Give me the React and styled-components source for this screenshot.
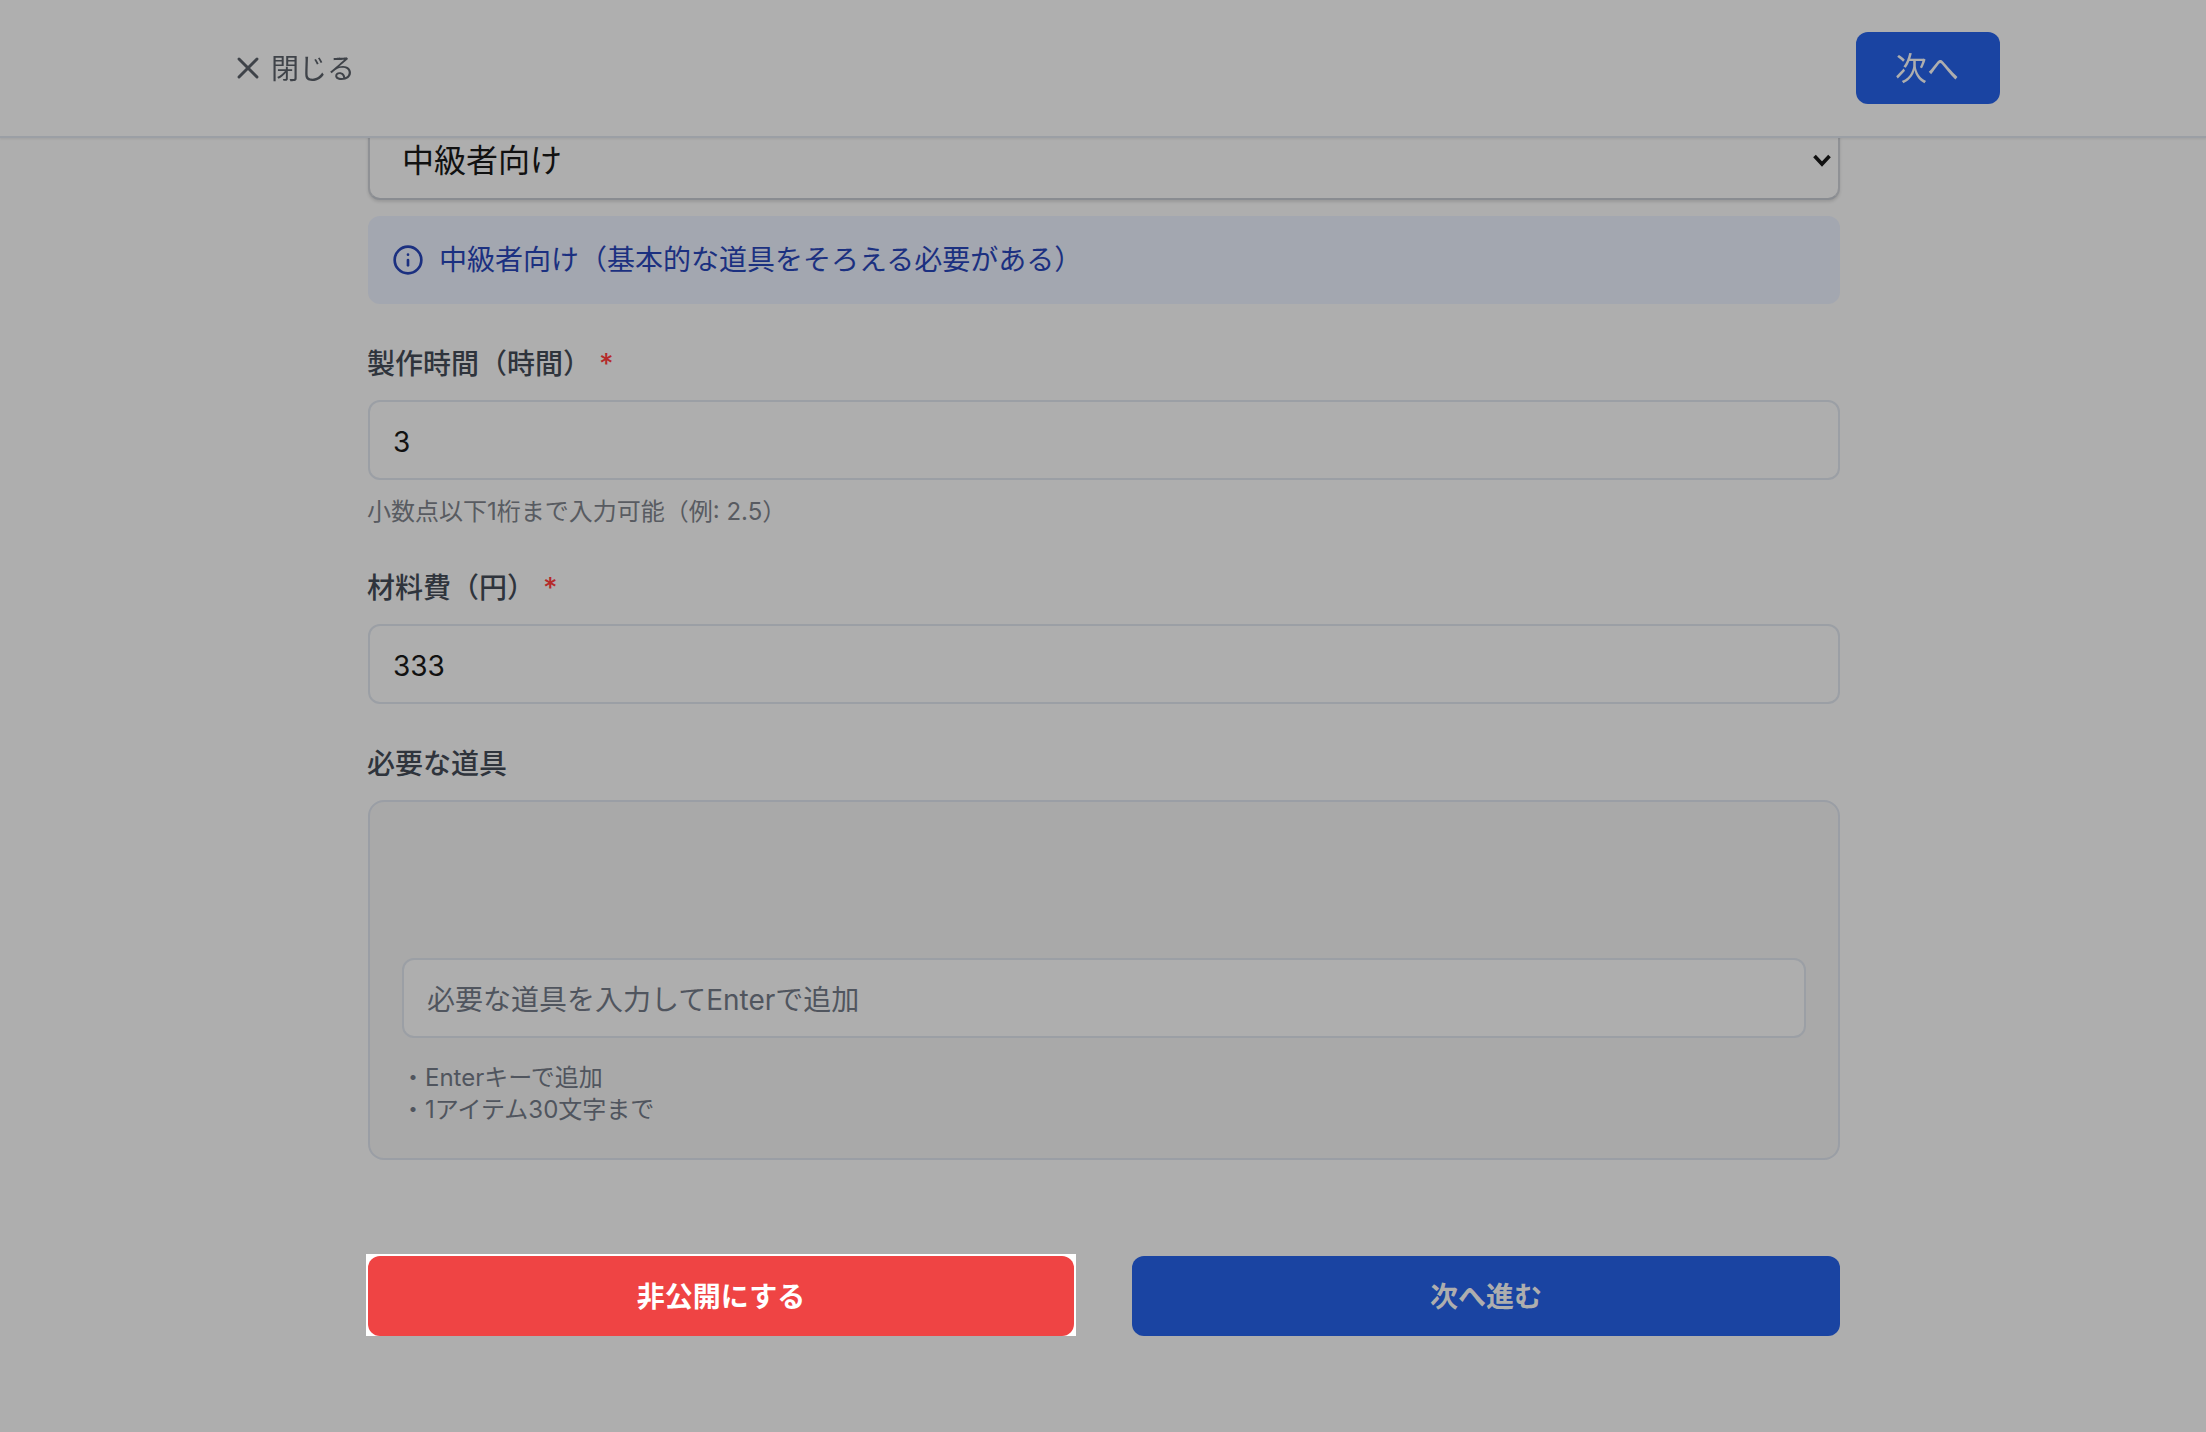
import React from "react";
import styled, { createGlobalStyle } from "styled-components";
import { X, Info } from "lucide-react";

const GlobalStyle = createGlobalStyle`
	html,
	body {
		margin: 0;
		height: 100%;
		overflow: hidden;
		background: #aeaeae;
	}
	body {
		font-family: Inter, "Noto Sans CJK JP", sans-serif;
	}
	* {
		box-sizing: border-box;
	}
`;

function App() {
	return (
		<>
			<GlobalStyle />
			<Header>
				<CloseButton type="button">
					<X size={36} strokeWidth={2} />
					<span>閉じる</span>
				</CloseButton>
				<NextButton type="button">次へ</NextButton>
			</Header>

			<Main>
				<SelectWrap>
					<LevelSelect defaultValue="middle">
						<option value="middle">中級者向け</option>
					</LevelSelect>
					<SelectArrow viewBox="0 0 20 14" aria-hidden="true">
						<path d="M2.5 3 L10 11 L17.5 3" />
					</SelectArrow>
				</SelectWrap>
				<Notice>
					<Info size={32} strokeWidth={2} />
					<span>中級者向け（基本的な道具をそろえる必要がある）</span>
				</Notice>

				<Label>
					製作時間（時間）<Required>*</Required>
				</Label>
				<TextInput type="text" value="3" readOnly />
				<Hint>小数点以下1桁まで入力可能（例: 2.5）</Hint>

				<Label>
					材料費（円）<Required>*</Required>
				</Label>
				<TextInput type="text" value="333" readOnly />

				<Label>必要な道具</Label>
				<ToolsBox>
					<TagArea />
					<ToolInput type="text" placeholder="必要な道具を入力してEnterで追加" />
					<ToolHints>
						<div>・Enterキーで追加</div>
						<div>・1アイテム30文字まで</div>
					</ToolHints>
				</ToolsBox>

				<Actions>
					<Highlight>
						<ActionButton $bg="#ef4444" $color="#fff" type="button">
							非公開にする
						</ActionButton>
					</Highlight>
					<ActionButton $bg="#1a44a2" $color="#aeaeae" type="button">
						次へ進む
					</ActionButton>
				</Actions>
			</Main>
		</>
	);
}

const Header = styled.header`
	position: fixed;
	top: 0;
	left: 0;
	right: 0;
	z-index: 10;
	display: flex;
	align-items: center;
	justify-content: space-between;
	height: 138px;
	padding: 0 206px;
	background: #afafaf;
	border-bottom: 2px solid #9b9fa5;
	box-shadow: 0 1px 2px rgba(0, 0, 0, 0.08);
`;

const CloseButton = styled.button`
	display: flex;
	align-items: center;
	gap: 5px;
	padding: 0 0 0 24px;
	border: none;
	background: none;
	color: #3f4349;
	font-family: inherit;
	font-size: 28px;

	span {
		padding-bottom: 2px;
	}
`;

const NextButton = styled.button`
	width: 144px;
	height: 72px;
	padding: 0 2px 4px 0;
	border: none;
	border-radius: 12px;
	background: #1a44a2;
	color: #aeaeae;
	font-family: inherit;
	font-size: 32px;
`;

const Main = styled.main`
	display: flex;
	flex-direction: column;
	width: 1472px;
	margin: 0 auto 0 368px;
	padding-top: 119px;
`;

const SelectWrap = styled.div`
	position: relative;
`;

const LevelSelect = styled.select`
	display: block;
	width: 100%;
	height: 81px;
	padding: 2px 32px 0;
	border: 2px solid #8f9195;
	border-bottom-color: #898c91;
	border-radius: 12px;
	background: #aeaeae;
	box-shadow: 0 2px 3px rgba(0, 0, 0, 0.12);
	color: #111;
	font-family: inherit;
	font-size: 32px;
	appearance: none;
`;

const SelectArrow = styled.svg`
	position: absolute;
	top: 34px;
	right: 8px;
	width: 20px;
	height: 14px;
	fill: none;
	stroke: #111;
	stroke-width: 3.6;
`;

const Notice = styled.div`
	display: flex;
	align-items: center;
	gap: 15px;
	margin-top: 16px;
	padding: 24px;
	border-radius: 12px;
	background: #a3a7b0;
	color: #1b3080;
	font-size: 28px;
	line-height: 40px;
`;

const Label = styled.label`
	display: block;
	margin: 40px 0 16px -1px;
	color: #2f343c;
	font-size: 28px;
	font-weight: 500;
	line-height: 40px;
`;

const Required = styled.span`
	margin-left: 8px;
	color: #b52a2a;
`;

const TextInput = styled.input`
	display: block;
	width: 100%;
	height: 80px;
	padding: 4px 23px 0;
	border: 2px solid #9b9fa5;
	border-radius: 12px;
	background: #aeaeae;
	color: #111;
	font-family: inherit;
	font-size: 28px;
	outline: none;
`;

const Hint = styled.p`
	margin: 16px 0 0 -1px;
	color: #585b61;
	font-size: 24px;
	line-height: 32px;
`;

const ToolsBox = styled.div`
	height: 360px;
	padding: 32px;
	border: 2px solid #9a9ea5;
	border-radius: 16px;
	background: #a9a9a9;
`;

const TagArea = styled.div`
	height: 124px;
`;

const ToolInput = styled(TextInput)`
	&::placeholder {
		color: #50555e;
		opacity: 1;
	}
`;

const ToolHints = styled.div`
	margin: 24px 0 0 -1px;
	color: #50555e;
	font-size: 24px;
	line-height: 32px;
`;

const Actions = styled.div`
	display: grid;
	grid-template-columns: 1fr 1fr;
	gap: 56px;
	margin-top: 96px;
`;

const Highlight = styled.div`
	margin: -2px 0 0 -2px;
	padding: 2px 2px 0;
	background: #fff;
`;

const ActionButton = styled.button`
	display: block;
	width: 100%;
	height: 80px;
	padding: 0 0 2px;
	border: none;
	border-radius: 12px;
	background: ${(p) => p.$bg};
	color: ${(p) => p.$color};
	font-family: inherit;
	font-size: 28px;
	font-weight: 700;
`;

export default App;
